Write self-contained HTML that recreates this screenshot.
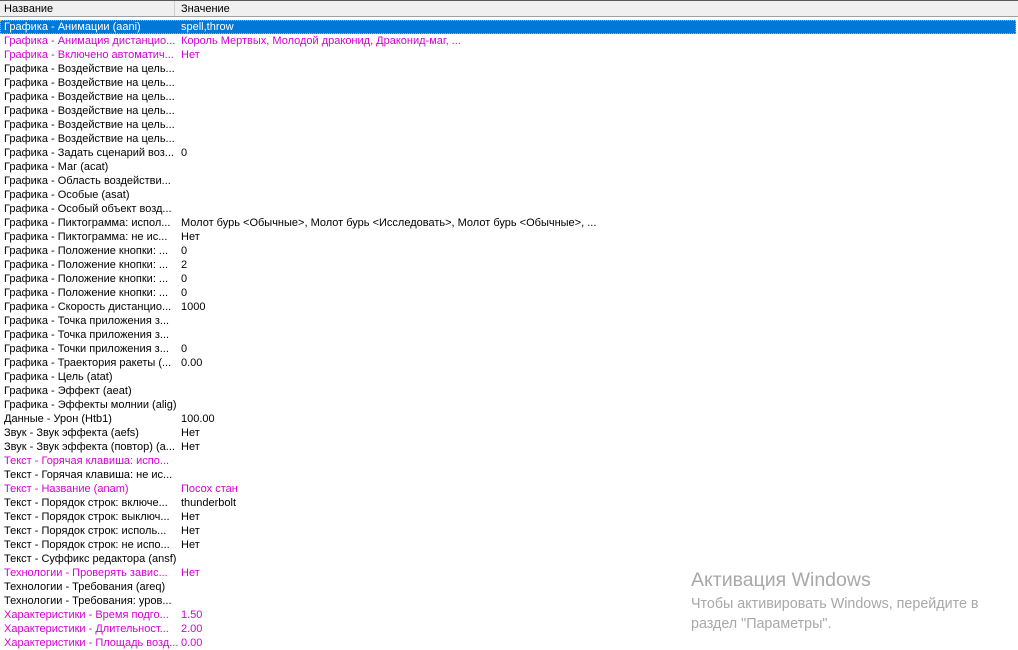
<!DOCTYPE html>
<html><head><meta charset="utf-8"><style>
html,body{margin:0;padding:0;width:1018px;height:639px;overflow:hidden;background:#fff;font-family:"Liberation Sans",Arial,sans-serif;font-size:11px;color:#000}
.top{position:absolute;left:0;top:0;width:1018px;height:1px;background:#5a5a5a}
.hdr{position:absolute;left:0;top:1px;width:1018px;height:15px;background:#f0f0f0;border-bottom:1px solid #a0a0a0}
.hdr span{position:absolute;top:1px;line-height:14px}
.hdr .div{position:absolute;left:174px;top:0;width:1px;height:15px;background:#d0d0d0}
.rows{position:absolute;left:0;top:20px;width:1018px}
.r{position:relative;height:14px;line-height:14px;white-space:nowrap}
.r .a{position:absolute;left:4px}
.r .b{position:absolute;left:181px}
.m{color:#d200d2}
.sel{background:#0078d7;color:#fff;outline:1px dotted #f0a050;outline-offset:-1px;width:1016px}
.wm{position:absolute;left:691px;color:#a8a8a8;white-space:nowrap}
</style></head><body>
<div class="top"></div>
<div class="hdr"><span style="left:4px">Название</span><div class="div"></div><span style="left:181px">Значение</span></div>
<div class="rows">
<div class="r sel"><span class="a">Графика - Анимации (aani)</span><span class="b">spell,throw</span></div>
<div class="r m"><span class="a">Графика - Анимация дистанцио...</span><span class="b">Король Мертвых, Молодой драконид, Драконид-маг, ...</span></div>
<div class="r m"><span class="a">Графика - Включено автоматич...</span><span class="b">Нет</span></div>
<div class="r"><span class="a">Графика - Воздействие на цель...</span></div>
<div class="r"><span class="a">Графика - Воздействие на цель...</span></div>
<div class="r"><span class="a">Графика - Воздействие на цель...</span></div>
<div class="r"><span class="a">Графика - Воздействие на цель...</span></div>
<div class="r"><span class="a">Графика - Воздействие на цель...</span></div>
<div class="r"><span class="a">Графика - Воздействие на цель...</span></div>
<div class="r"><span class="a">Графика - Задать сценарий воз...</span><span class="b">0</span></div>
<div class="r"><span class="a">Графика - Маг (acat)</span></div>
<div class="r"><span class="a">Графика - Область воздействи...</span></div>
<div class="r"><span class="a">Графика - Особые (asat)</span></div>
<div class="r"><span class="a">Графика - Особый объект возд...</span></div>
<div class="r"><span class="a">Графика - Пиктограмма: испол...</span><span class="b">Молот бурь &lt;Обычные&gt;, Молот бурь &lt;Исследовать&gt;, Молот бурь &lt;Обычные&gt;, ...</span></div>
<div class="r"><span class="a">Графика - Пиктограмма: не ис...</span><span class="b">Нет</span></div>
<div class="r"><span class="a">Графика - Положение кнопки: ...</span><span class="b">0</span></div>
<div class="r"><span class="a">Графика - Положение кнопки: ...</span><span class="b">2</span></div>
<div class="r"><span class="a">Графика - Положение кнопки: ...</span><span class="b">0</span></div>
<div class="r"><span class="a">Графика - Положение кнопки: ...</span><span class="b">0</span></div>
<div class="r"><span class="a">Графика - Скорость дистанцио...</span><span class="b">1000</span></div>
<div class="r"><span class="a">Графика - Точка приложения з...</span></div>
<div class="r"><span class="a">Графика - Точка приложения з...</span></div>
<div class="r"><span class="a">Графика - Точки приложения з...</span><span class="b">0</span></div>
<div class="r"><span class="a">Графика - Траектория ракеты (...</span><span class="b">0.00</span></div>
<div class="r"><span class="a">Графика - Цель (atat)</span></div>
<div class="r"><span class="a">Графика - Эффект (aeat)</span></div>
<div class="r"><span class="a">Графика - Эффекты молнии (alig)</span></div>
<div class="r"><span class="a">Данные - Урон (Htb1)</span><span class="b">100.00</span></div>
<div class="r"><span class="a">Звук - Звук эффекта (aefs)</span><span class="b">Нет</span></div>
<div class="r"><span class="a">Звук - Звук эффекта (повтор) (a...</span><span class="b">Нет</span></div>
<div class="r m"><span class="a">Текст - Горячая клавиша: испо...</span></div>
<div class="r"><span class="a">Текст - Горячая клавиша: не ис...</span></div>
<div class="r m"><span class="a">Текст - Название (anam)</span><span class="b">Посох стан</span></div>
<div class="r"><span class="a">Текст - Порядок строк: включе...</span><span class="b">thunderbolt</span></div>
<div class="r"><span class="a">Текст - Порядок строк: выключ...</span><span class="b">Нет</span></div>
<div class="r"><span class="a">Текст - Порядок строк: исполь...</span><span class="b">Нет</span></div>
<div class="r"><span class="a">Текст - Порядок строк: не испо...</span><span class="b">Нет</span></div>
<div class="r"><span class="a">Текст - Суффикс редактора (ansf)</span></div>
<div class="r m"><span class="a">Технологии - Проверять завис...</span><span class="b">Нет</span></div>
<div class="r"><span class="a">Технологии - Требования (areq)</span></div>
<div class="r"><span class="a">Технологии - Требования: уров...</span></div>
<div class="r m"><span class="a">Характеристики - Время подго...</span><span class="b">1.50</span></div>
<div class="r m"><span class="a">Характеристики - Длительност...</span><span class="b">2.00</span></div>
<div class="r m"><span class="a">Характеристики - Площадь возд...</span><span class="b">0.00</span></div>
</div>
<div class="wm" style="top:569px;font-size:19.5px;line-height:22px">Активация Windows</div>
<div class="wm" style="top:594px;font-size:14.3px;line-height:20px">Чтобы активировать Windows, перейдите в<br>раздел "Параметры".</div>
</body></html>
